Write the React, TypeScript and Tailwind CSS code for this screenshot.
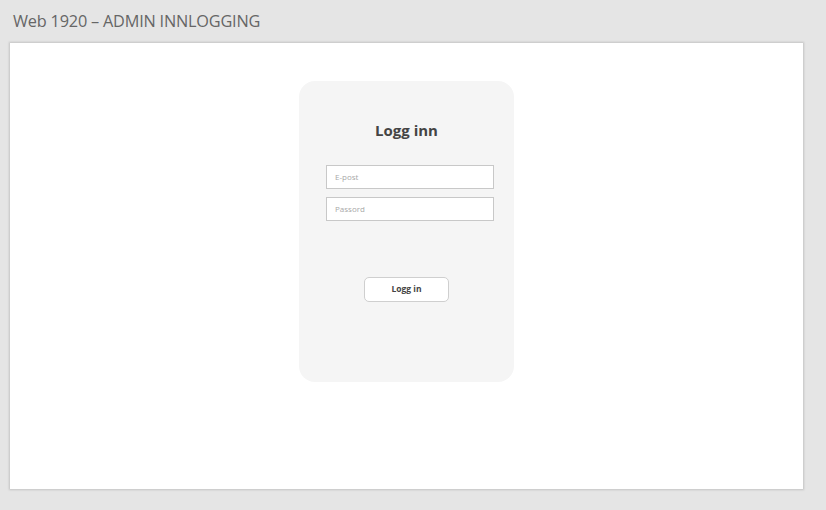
export default function App() {
  return (
    <div className="w-[826px] h-[510px] bg-[#e5e5e5] overflow-hidden" style={{ fontFamily: '"Open Sans", "Noto Sans", sans-serif' }}>
      <div className="h-[43px] pl-[13px] pt-[9px] text-[16.3px] leading-[24px] text-[#666666] tracking-[-0.2px]">
        Web 1920 – ADMIN INNLOGGING
      </div>
      <div className="ml-[10px] w-[793px] h-[446px] bg-white shadow-[0_0_2px_1px_rgba(0,0,0,0.15)] pt-[38px] pl-[289px]">
        <div className="w-[215px] h-[301px] bg-[#f5f5f5] rounded-[16px] flex flex-col">
          <div className="mt-[38px] text-center text-[15px] leading-[22px] font-bold text-[#444444]">Logg inn</div>
          <div className="ml-[27px] mt-[24px] flex flex-col gap-[8px]">
            <div className="w-[168px] h-[24px] bg-white border border-[#c8c8c8] flex items-center pl-[8px] text-[8px] text-[#a8a8a8]">
              E-post
            </div>
            <div className="w-[168px] h-[24px] bg-white border border-[#c8c8c8] flex items-center pl-[8px] text-[8px] text-[#a8a8a8]">
              Passord
            </div>
          </div>
          <button className="ml-[65px] mt-[56px] w-[85px] h-[25px] bg-white border border-[#cfcfcf] rounded-[5px] text-[8.5px] font-bold text-[#444444] flex items-center justify-center">
            Logg in
          </button>
        </div>
      </div>
    </div>
  );
}
